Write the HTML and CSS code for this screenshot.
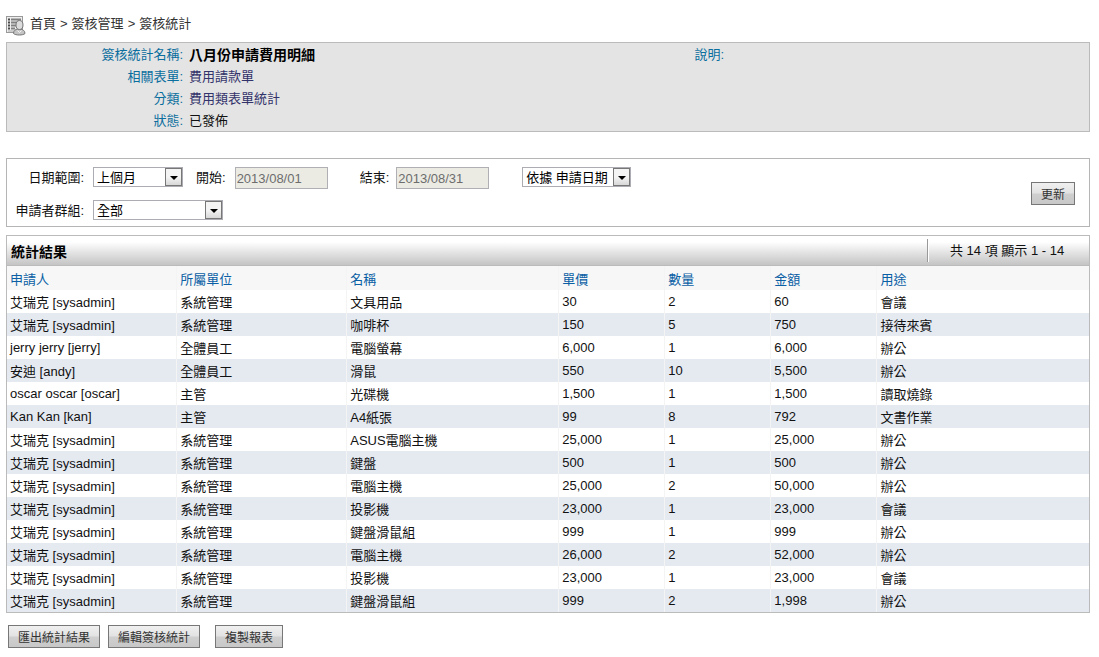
FILE: index.html
```
<!DOCTYPE html>
<html lang="zh-Hant">
<head>
  <meta charset="utf-8">
  <title>簽核統計</title>
  <link rel="stylesheet" href="styles.css">
</head>
<body>
  <nav class="breadcrumb">
    <svg class="icon" width="20" height="21" viewBox="0 0 20 21">
      <rect x="0.500" y="1.500" width="16" height="16" fill="#eee" stroke="#999"/>
      <path d="M2 4.500h2M2 7.500h2M2 10.500h2M2 13.500h2" stroke="#4a4a4a" stroke-width="2"/>
      <path d="M5 4.500h10M5 7.500h10M5 10.500h5M5 13.500h4" stroke="#808080" stroke-width="2"/>
      <path d="M2 16h6" stroke="#aaa"/>
      <path d="M7.500 18.500c0-3 2-4 4-4.500h3c2 .5 4.500 1.500 4.500 4.500-2 2-9.500 2-11.500 0z" fill="#c4c4c4" stroke="#777"/>
      <ellipse cx="13.500" cy="10" rx="3.500" ry="4.500" fill="#dcdcdc" stroke="#777"/>
      <path d="M11.500 15.500l2 2 2-2" fill="none" stroke="#f4f4f4"/>
    </svg>
    <a href="#">首頁</a> &gt; <a href="#">簽核管理</a> &gt; <a href="#">簽核統計</a>
  </nav>

  <section class="info">
    <dl>
      <dt>簽核統計名稱:</dt><dd class="name">八月份申請費用明細</dd>
      <dt>相關表單:</dt><dd><a href="#">費用請款單</a></dd>
      <dt>分類:</dt><dd><a href="#">費用類表單統計</a></dd>
      <dt>狀態:</dt><dd>已發佈</dd>
    </dl>
    <dl>
      <dt>說明:</dt><dd></dd>
    </dl>
  </section>

  <form class="filter">
    <div class="fields">
      <div class="row">
        <label class="first" for="range">日期範圍:</label>
        <span class="select range"><select id="range"><option>上個月</option></select></span>
        <label class="start" for="start">開始:</label>
        <input type="text" id="start" value="2013/08/01" disabled>
        <label class="end" for="end">結束:</label>
        <input type="text" id="end" value="2013/08/31" disabled>
        <span class="select basis"><select aria-label="依據"><option>依據 申請日期</option></select></span>
      </div>
      <div class="row">
        <label class="first" for="group">申請者群組:</label>
        <span class="select group"><select id="group"><option>全部</option></select></span>
      </div>
    </div>
    <button type="button">更新</button>
  </form>

  <section class="result">
    <header>
      <h2>統計結果</h2>
      <div class="count">共 14 項 顯示 1 - 14</div>
    </header>
    <table>
      <colgroup>
        <col class="wide"><col class="wide"><col class="item"><col class="num"><col class="num"><col class="num"><col>
      </colgroup>
      <thead>
        <tr><th><a href="#">申請人</a></th><th><a href="#">所屬單位</a></th><th><a href="#">名稱</a></th><th><a href="#">單價</a></th><th><a href="#">數量</a></th><th><a href="#">金額</a></th><th><a href="#">用途</a></th></tr>
      </thead>
      <tbody>
        <tr><td>艾瑞克 [sysadmin]</td><td>系統管理</td><td>文具用品</td><td>30</td><td>2</td><td>60</td><td>會議</td></tr>
        <tr><td>艾瑞克 [sysadmin]</td><td>系統管理</td><td>咖啡杯</td><td>150</td><td>5</td><td>750</td><td>接待來賓</td></tr>
        <tr><td>jerry jerry [jerry]</td><td>全體員工</td><td>電腦螢幕</td><td>6,000</td><td>1</td><td>6,000</td><td>辦公</td></tr>
        <tr><td>安迪 [andy]</td><td>全體員工</td><td>滑鼠</td><td>550</td><td>10</td><td>5,500</td><td>辦公</td></tr>
        <tr><td>oscar oscar [oscar]</td><td>主管</td><td>光碟機</td><td>1,500</td><td>1</td><td>1,500</td><td>讀取燒錄</td></tr>
        <tr><td>Kan Kan [kan]</td><td>主管</td><td>A4紙張</td><td>99</td><td>8</td><td>792</td><td>文書作業</td></tr>
        <tr><td>艾瑞克 [sysadmin]</td><td>系統管理</td><td>ASUS電腦主機</td><td>25,000</td><td>1</td><td>25,000</td><td>辦公</td></tr>
        <tr><td>艾瑞克 [sysadmin]</td><td>系統管理</td><td>鍵盤</td><td>500</td><td>1</td><td>500</td><td>辦公</td></tr>
        <tr><td>艾瑞克 [sysadmin]</td><td>系統管理</td><td>電腦主機</td><td>25,000</td><td>2</td><td>50,000</td><td>辦公</td></tr>
        <tr><td>艾瑞克 [sysadmin]</td><td>系統管理</td><td>投影機</td><td>23,000</td><td>1</td><td>23,000</td><td>會議</td></tr>
        <tr><td>艾瑞克 [sysadmin]</td><td>系統管理</td><td>鍵盤滑鼠組</td><td>999</td><td>1</td><td>999</td><td>辦公</td></tr>
        <tr><td>艾瑞克 [sysadmin]</td><td>系統管理</td><td>電腦主機</td><td>26,000</td><td>2</td><td>52,000</td><td>辦公</td></tr>
        <tr><td>艾瑞克 [sysadmin]</td><td>系統管理</td><td>投影機</td><td>23,000</td><td>1</td><td>23,000</td><td>會議</td></tr>
        <tr><td>艾瑞克 [sysadmin]</td><td>系統管理</td><td>鍵盤滑鼠組</td><td>999</td><td>2</td><td>1,998</td><td>辦公</td></tr>
      </tbody>
    </table>
  </section>

  <div class="actions">
    <button type="button">匯出統計結果</button>
    <button type="button">編輯簽核統計</button>
    <button type="button" class="copy">複製報表</button>
  </div>
</body>
</html>
```
FILE: styles.css
```
* {
  box-sizing: border-box;
}
body {
  margin: 0 9px 0 6px;
  background: #fff;
  color: #111;
}
body, input, select, button {
  font-family: "Liberation Sans", "Noto Sans CJK TC", sans-serif;
  font-size: 13px;
}
a {
  color: inherit;
  text-decoration: none;
}

/* breadcrumb */
.breadcrumb {
  display: flex;
  align-items: flex-start;
  gap: 4px;
  height: 42px;
  padding-top: 15px;
  line-height: 18px;
  color: #333;
}

/* report info */
.info {
  display: grid;
  grid-template-columns: 1fr 1fr;
  border: 1px solid #bbb;
  background: #e4e4e4;
}
.info dl {
  display: grid;
  grid-template-columns: 176px 1fr;
  grid-auto-rows: 22px;
  column-gap: 6px;
  line-height: 24px;
  margin: 0;
}
.info dt {
  color: #0a6e9e;
  text-align: right;
}
.info dd {
  margin: 0;
}
.info dd a {
  color: #33336b;
}
.info .name {
  font-size: 14px;
  font-weight: bold;
  color: #000;
}

/* filter */
.filter {
  display: flex;
  align-items: center;
  justify-content: space-between;
  margin: 26px 0 8px;
  padding: 8px 14px 6px 0;
  border: 1px solid #b5b5b5;
}
.fields {
  display: flex;
  flex-direction: column;
  gap: 11px;
}
.row {
  display: flex;
  align-items: flex-start;
}
.row label {
  line-height: 22px;
  margin-right: 9px;
  white-space: nowrap;
}
.row .first {
  width: 77px;
  text-align: right;
}
.row .start {
  margin-left: 13px;
}
.row .end {
  margin-left: 32px;
  margin-right: 7px;
}
.row:last-child {
  height: 20px;
}
.row input {
  width: 93px;
  height: 22px;
  padding: 0 1px;
  border: 1px solid #b0b0b4;
  background: #ebebe4;
  color: #6d6d6d;
}
.select {
  position: relative;
  height: 20px;
}
.select select {
  display: block;
  appearance: none;
  width: 100%;
  height: 20px;
  padding: 0 18px 0 3px;
  border: 1px solid #abadb3;
  border-radius: 0;
  background: #fff;
  color: #000;
}
.select::before {
  content: "";
  position: absolute;
  top: 1px;
  right: 1px;
  width: 15px;
  height: 16px;
  border: 1px solid #777;
  background: linear-gradient(#f4f4f4 50%, #d8d8d8);
  pointer-events: none;
}
.select::after {
  content: "";
  position: absolute;
  top: 9px;
  right: 5px;
  border: 4px solid transparent;
  border-top-color: #000;
  border-bottom: 0;
  pointer-events: none;
}
.range {
  width: 90px;
}
.group {
  width: 130px;
}
.basis {
  width: 109px;
  margin-left: 33px;
}

button {
  height: 23px;
  padding: 0 9px;
  border: 1px solid #777;
  background: linear-gradient(#f0f0f0, #e2e2e2 48%, #cfcfcf 52%, #c8c8c8);
  color: #333;
  font-size: 12px;
}

/* result */
.result {
  border: 1px solid #bbb;
}
.result header {
  display: flex;
  align-items: center;
  justify-content: space-between;
  height: 30px;
  padding-left: 4px;
  background: linear-gradient(#fff 20%, #c4c4c4);
  border-bottom: 1px solid #bbb;
}
.result h2 {
  margin: 0;
  font-size: 14px;
  color: #000;
}
.count {
  width: 162px;
  padding-left: 22px;
  border-left: 1px solid #999;
  box-shadow: inset 1px 0 #fff;
  line-height: 23px;
}
table {
  width: 100%;
  table-layout: fixed;
  border-collapse: collapse;
}
.wide {
  width: 15.7%;
}
.item {
  width: 19.6%;
}
.num {
  width: 9.8%;
}
th, td {
  height: 23px;
  padding: 0 3px;
  border-right: 1px solid #f4f4f4;
  text-align: left;
  white-space: nowrap;
}
th:last-child, td:last-child {
  border-right: 0;
}
th {
  height: 24px;
  background: #f7f7f7;
  color: #0a5fa5;
  font-weight: normal;
}
tbody tr:nth-child(even) {
  background: #e5eaf1;
}

.actions {
  display: flex;
  gap: 8px;
  padding: 12px 2px 9px;
}
.copy {
  margin-left: 7px;
}
```
